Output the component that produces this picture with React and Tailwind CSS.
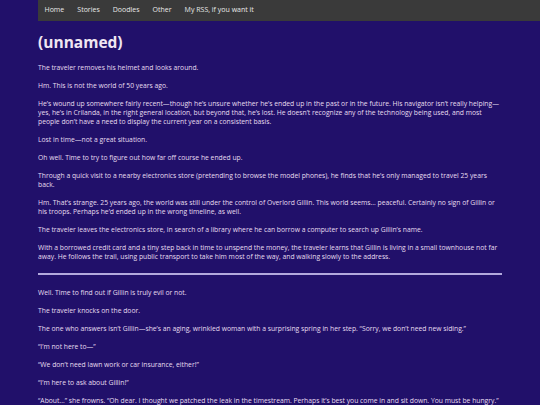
export default function App() {
  const navItems = ["Home", "Stories", "Doodles", "Other", "My RSS, if you want it"];
  const before = [
    "The traveler removes his helmet and looks around.",
    "Hm. This is not the world of 50 years ago.",
    "He\u2019s wound up somewhere fairly recent\u2014though he\u2019s unsure whether he\u2019s ended up in the past or in the future. His navigator isn\u2019t really helping\u2014yes, he\u2019s in Crilanda, in the right general location, but beyond that, he\u2019s lost. He doesn\u2019t recognize any of the technology being used, and most people don\u2019t have a need to display the current year on a consistent basis.",
    "Lost in time\u2014not a great situation.",
    "Oh well. Time to try to figure out how far off course he ended up.",
    "Through a quick visit to a nearby electronics store (pretending to browse the model phones), he finds that he\u2019s only managed to travel 25 years back.",
    "Hm. That\u2019s strange. 25 years ago, the world was still under the control of Overlord Gillin. This world seems\u2026 peaceful. Certainly no sign of Gillin or his troops. Perhaps he\u2019d ended up in the wrong timeline, as well.",
    "The traveler leaves the electronics store, in search of a library where he can borrow a computer to search up Gillin\u2019s name.",
    "With a borrowed credit card and a tiny step back in time to unspend the money, the traveler learns that Gillin is living in a small townhouse not far away. He follows the trail, using public transport to take him most of the way, and walking slowly to the address.",
  ];
  const after = [
    "Well. Time to find out if Gillin is truly evil or not.",
    "The traveler knocks on the door.",
    "The one who answers isn\u2019t Gillin\u2014she\u2019s an aging, wrinkled woman with a surprising spring in her step. \u201cSorry, we don\u2019t need new siding.\u201d",
    "\u201cI\u2019m not here to\u2014\u201d",
    "\u201cWe don\u2019t need lawn work or car insurance, either!\u201d",
    "\u201cI\u2019m here to ask about Gillin!\u201d",
    "\u201cAbout\u2026\u201d she frowns. \u201cOh dear. I thought we patched the leak in the timestream. Perhaps it\u2019s best you come in and sit down. You must be hungry.\u201d",
  ];
  return (
    <div className="w-[540px] h-[405px] overflow-hidden bg-[#21106a] text-[#e7def0]" style={{ fontFamily: '"Open Sans", sans-serif' }}>
      <nav className="ml-[38px] h-[21px] bg-[#3a3a3a] flex items-center">
        {navItems.map((n) => (
          <span key={n} className="px-[6.5px] text-[7px] text-[#e8e8e8]">{n}</span>
        ))}
      </nav>
      <div className="ml-[38px] w-[464px]">
        <h1 className="text-[15.5px] font-bold leading-[20px] mt-[11px] mb-[11px] text-[#f0e6f2]">(unnamed)</h1>
        <div className="text-[6.78px] leading-[9px]">
          {before.map((p, i) => (
            <p key={i} className="mb-[9px]">{p}</p>
          ))}
          <hr className="border-0 h-[2px] bg-[#b3a9dd] mt-[12px] mb-[13px]" />
          {after.map((p, i) => (
            <p key={i} className="mb-[9px]">{p}</p>
          ))}
        </div>
      </div>
    </div>
  );
}
